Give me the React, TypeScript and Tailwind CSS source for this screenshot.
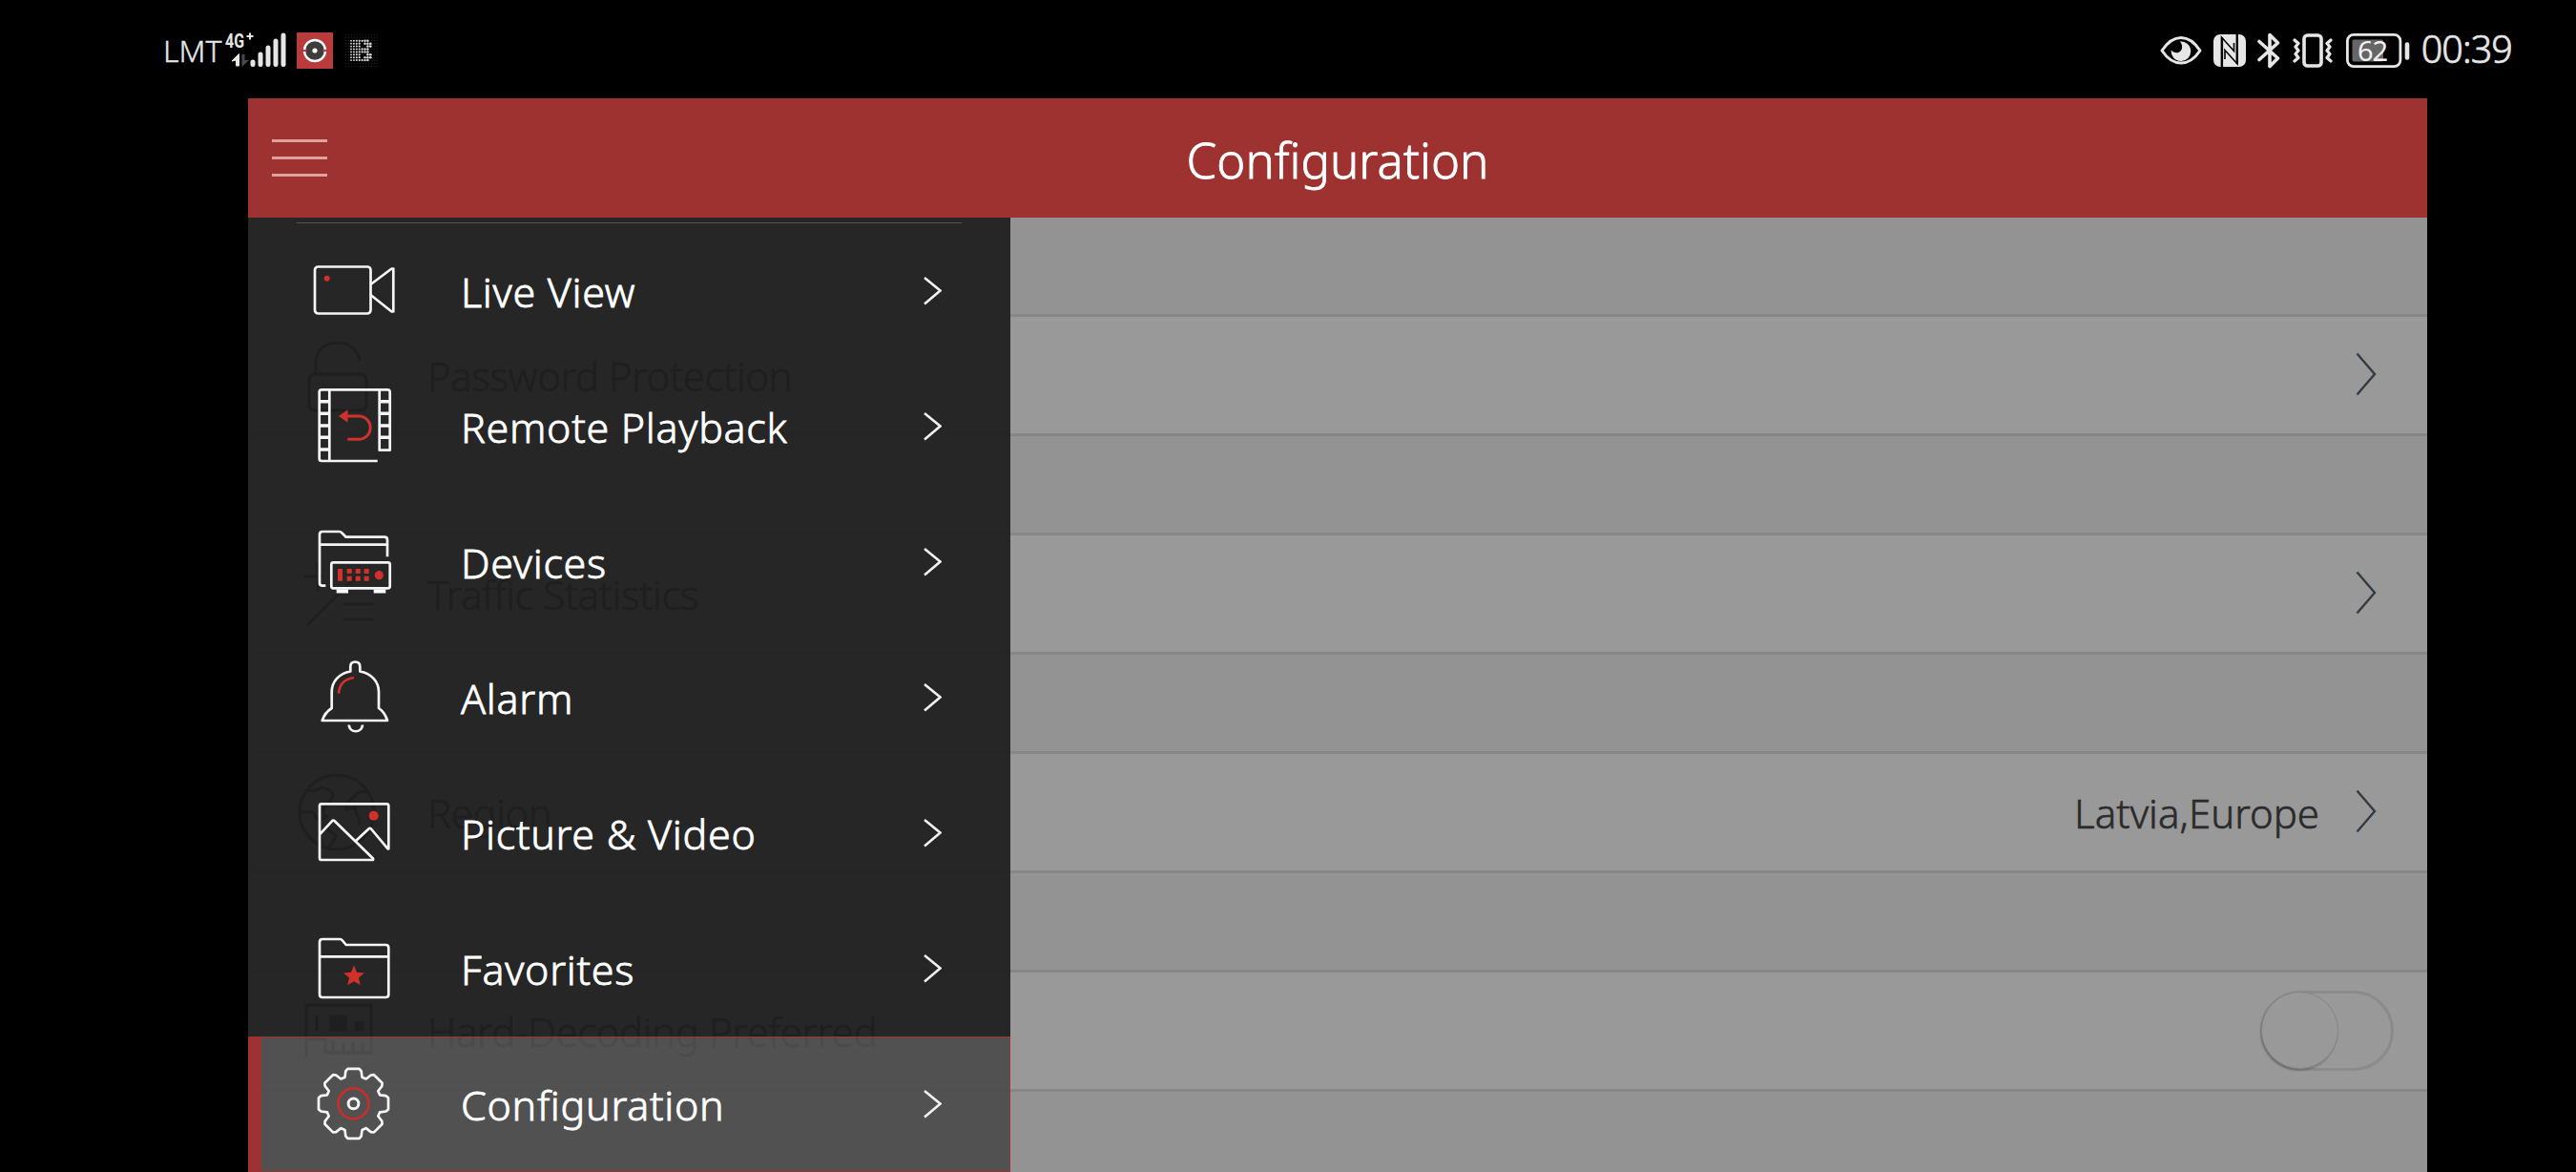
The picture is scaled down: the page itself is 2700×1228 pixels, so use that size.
import type { ReactNode } from "react";

const RED = "#d0312b";

/* ---------- Status bar ---------- */

const DOTS = [
  "1111111.",
  "1111.111",
  "1111..11",
  "1111111.",
  "1111111.",
  "1111..11",
  "1111.111",
  "1111111.",
];

function SignalIcon() {
  return (
    <svg width="68" height="40" viewBox="0 0 68 40" className="ml-[3px] overflow-visible">
      <text x="1" y="17" fontSize="19.5" fontWeight="700" fill="#e6e6e6" fontFamily="Roboto, sans-serif" textLength="20" lengthAdjust="spacingAndGlyphs">
        4G
      </text>
      <path d="M27 1.5v7M23.500 5h7" stroke="#e6e6e6" strokeWidth="2" />
      <path d="M8 31l7.5-7.5V36h-3V30z" fill="#e6e6e6" stroke="#e6e6e6" strokeWidth="1" />
      <path d="M18.500 24h3v6h4.500l-7.500 7z" fill="#4a4a4a" />
      <g stroke="#e6e6e6" strokeWidth="5" strokeLinecap="round">
        <path d="M30 32v2.500M38 24v10.500M46 17v17.500M54 10v24.500M62 4v30.500" />
      </g>
    </svg>
  );
}

function RecordAppIcon() {
  return (
    <svg width="38" height="38" viewBox="0 0 38 38" className="ml-[8px]">
      <rect width="38" height="38" fill="#b93b3c" />
      <circle cx="19" cy="19" r="11" fill="#3d3d3d" stroke="#fff" strokeWidth="2.4" />
      <path d="M5.500 19h5M27.500 19h5" stroke="#b93b3c" strokeWidth="2" />
      <circle cx="19" cy="19" r="2.600" fill="#fff" />
    </svg>
  );
}

function DotsIcon() {
  return (
    <svg width="36" height="38" viewBox="0 0 36 38" className="ml-[12px]">
      {Array.from({ length: 144 }, (_, i) => (
        <circle key={i} cx={1.5 + (i % 12) * 3} cy={2.5 + Math.floor(i / 12) * 3} r="0.8" fill="#1c1c1c" />
      ))}
      {DOTS.map((row, y) =>
        row.split("").map((c, x) =>
          c === "1" ? <circle key={`${x}-${y}`} cx={7 + x * 2.9} cy={8.8 + y * 2.9} r={0.9 + x * 0.06} fill="#dcdcdc" /> : null
        )
      )}
    </svg>
  );
}

function EyeIcon() {
  return (
    <svg width="44" height="32" viewBox="0 0 44 32">
      <path d="M2 16C8 7 14.500 2.500 22 2.500S36 7 42 16C36 25 29.500 29 22 29S8 25 2 16z" fill="none" stroke="#e6e6e6" strokeWidth="3" strokeLinejoin="round" />
      <path d="M20.500 6.500A10.300 10.300 0 1 1 11.700 15.500C14 18.500 19 19.500 21.500 16.500C24 13.500 23.500 8.500 20.500 6.500z" fill="#e6e6e6" />
    </svg>
  );
}

function NfcIcon() {
  return (
    <svg width="34" height="34" viewBox="0 0 34 34" className="ml-[12px]">
      <rect width="34" height="34" rx="7" fill="#e6e6e6" />
      <path d="M8.500 34V3L21.500 17.500V9M25 0V31L12 16.500V26" fill="none" stroke="#000" strokeWidth="1.600" />
      <path d="M9 3.500v30.500M24.700 0v30.500" stroke="#000" strokeWidth="2.200" />
    </svg>
  );
}

function BluetoothIcon() {
  return (
    <svg width="24" height="38" viewBox="0 0 24 38" className="ml-[12px]">
      <path d="M2 9.500L21.500 27L13 35.500V2.500L21.500 11L2 28.500" fill="none" stroke="#e6e6e6" strokeWidth="3.600" strokeLinecap="round" strokeLinejoin="round" />
    </svg>
  );
}

function VibrateIcon() {
  return (
    <svg width="42" height="36" viewBox="0 0 42 36" className="ml-[13px]">
      <rect x="12" y="2" width="18" height="32" rx="3.500" fill="none" stroke="#e6e6e6" strokeWidth="3.600" />
      <path d="M2 7l4 3.500-3 3.500 3 4-3 3.500 3 4L2 29M40 7l-4 3.500 3 3.500-3 4 3 3.500-3 4L40 29" fill="none" stroke="#e6e6e6" strokeWidth="3.200" strokeLinecap="round" strokeLinejoin="round" />
    </svg>
  );
}

function BatteryIcon() {
  return (
    <svg width="67" height="36" viewBox="0 0 67 36" className="ml-[14px] overflow-visible">
      <rect x="1.400" y="1.400" width="55.500" height="33.200" rx="6.500" fill="none" stroke="#e6e6e6" strokeWidth="2.800" />
      <rect x="6.500" y="6.500" width="32.500" height="23" rx="2" fill="#666" />
      <text x="12" y="28.500" fontSize="29" fontWeight="400" fill="#f2f2f2" fontFamily="'Noto Sans', sans-serif" textLength="32">
        62
      </text>
      <path d="M64 11.500v14" stroke="#e6e6e6" strokeWidth="4.600" strokeLinecap="round" />
    </svg>
  );
}

function StatusBar() {
  return (
    <div className="flex h-[103px] items-center justify-between pr-[67px] pl-[171px] pt-[2px] text-[#e6e6e6]">
      <div className="flex items-center">
        <span className="text-[32px] leading-none font-[300] [-webkit-text-stroke:0.4px]">LMT</span>
        <SignalIcon />
        <RecordAppIcon />
        <DotsIcon />
      </div>
      <div className="flex items-center">
        <EyeIcon />
        <NfcIcon />
        <BluetoothIcon />
        <VibrateIcon />
        <BatteryIcon />
        <span className="ml-[12px] -mt-[2px] text-[39.5px] leading-none font-[300] tracking-[-0.9px] [-webkit-text-stroke:0.7px]">00:39</span>
      </div>
    </div>
  );
}

/* ---------- Settings list ---------- */

function LockIcon() {
  return (
    <>
      <rect x="11" y="39" width="60" height="38" rx="6" />
      <path d="M18 39V28C18 13 28 6 41 6S62 14 64 25" />
    </>
  );
}

function TrafficIcon() {
  return (
    <>
      <path d="M5 22h20M20 8v30" />
      <path d="M9 73L60 22M47 51h32M47 67h32" />
    </>
  );
}

function GlobeIcon() {
  return (
    <>
      <circle cx="40" cy="40" r="39" />
      <path d="M9 16q8 4 14-2q12 2 13 8q-2 8-9 13q-3 6 2 10l-9 2-6-7H2" />
      <path d="M73 20q-10-4-14 3q-10 6-9 14l9-2 2 8q4 4 2 10M24 77q2-8-3-14l9-6 9 8-7 13" />
    </>
  );
}

function ChipIcon() {
  return (
    <>
      <path d="M8 68V13h68v50H28V49H8" />
      <path d="M19 24v16M36 50v12M47 52v10M57 52v10M67 52v10" />
      <rect x="34" y="25" width="15" height="14" fill="#2b2b2b" />
      <rect x="60" y="32" width="7" height="7" fill="#2b2b2b" />
    </>
  );
}

function RowArrow() {
  return (
    <svg width="22" height="46" viewBox="0 0 22 46" className="mr-[53px] -mt-[2px]">
      <path d="M1.500 1.500L20 23 1.500 44.500" fill="none" stroke="#343a42" strokeWidth="2.400" />
    </svg>
  );
}

function Toggle() {
  return (
    <div className="mr-[35px] h-[84px] w-[140px] rounded-full border-[3px] border-[#8b8b8b]">
      <div className="-mt-[2px] -ml-[2px] size-[81px] rounded-full border-[1.5px] border-[#868686] bg-[#999] shadow-[-1px_2px_2px_rgba(0,0,0,0.2)]" />
    </div>
  );
}

function SettingRow({ label, icon, children }: { label: string; icon: ReactNode; children: ReactNode }) {
  return (
    <div className="mt-[101px] flex h-[128px] items-center border-y-[3px] border-[#878787] bg-[#999] text-[#2b2b2b]">
      <svg width="80" height="80" viewBox="0 0 80 80" className="ml-[53px] overflow-visible" fill="none" stroke="#2b2b2b" strokeWidth="3">
        {icon}
      </svg>
      <span className="mt-[2px] ml-[55px] flex-1 text-[42px] leading-none font-[300] tracking-[-0.45px] [-webkit-text-stroke:0.6px]">{label}</span>
      {children}
    </div>
  );
}

function Settings() {
  return (
    <div className="h-[1000px] overflow-hidden bg-[#939393]">
      <SettingRow label="Password Protection" icon={<LockIcon />}>
        <RowArrow />
      </SettingRow>
      <SettingRow label="Traffic Statistics" icon={<TrafficIcon />}>
        <RowArrow />
      </SettingRow>
      <SettingRow label="Region" icon={<GlobeIcon />}>
        <span className="mt-[2px] mr-[38px] text-[42px] leading-none font-[300] [-webkit-text-stroke:0.6px]">Latvia,Europe</span>
        <RowArrow />
      </SettingRow>
      <SettingRow label="Hard-Decoding Preferred" icon={<ChipIcon />}>
        <Toggle />
      </SettingRow>
    </div>
  );
}

/* ---------- Drawer ---------- */

const CX = 44.5;
const CY = 44.3;
const TOOTH = [
  [29, -18],
  [35, -13.5],
  [37, -9.5],
  [37, 9.5],
  [35, 13.5],
  [29, 18],
];

const gearPoints = Array.from({ length: 8 }, (_, i) =>
  TOOTH.map(([r, deg]) => {
    const a = ((deg + i * 45 - 90) * Math.PI) / 180;
    return `${(CX + r * Math.cos(a)).toFixed(1)},${(CY + r * Math.sin(a)).toFixed(1)}`;
  }).join(" ")
).join(" ");

const starPoints = Array.from({ length: 10 }, (_, i) => {
  const r = i % 2 ? 5.2 : 11.5;
  const a = ((i * 36 - 90) * Math.PI) / 180;
  return `${(45 + r * Math.cos(a)).toFixed(1)},${(53 + r * Math.sin(a)).toFixed(1)}`;
}).join(" ");

const menu = [
  {
    label: "Live View",
    icon: (
      <>
        <rect x="4" y="19.5" width="58.5" height="49" rx="3.5" />
        <path d="M62.500 38L84.500 21.500H86.300V66.500H84.500L62.500 49" />
        <circle cx="16.700" cy="31.700" r="3" fill={RED} stroke="none" />
      </>
    ),
  },
  {
    label: "Remote Playback",
    icon: (
      <>
        <path d="M69.700 81H11.200Q8.700 81 8.700 78.500V8.800Q8.700 6.300 11.200 6.300H80.200Q82.700 6.300 82.700 8.800V69.700H71.700V6.300M19.300 6.300V81" />
        <path strokeWidth="3.400" d="M8.700 18.700h10.600M8.700 31.300h10.600M8.700 44h10.600M8.700 56.300h10.600M8.700 69h10.600M71.700 18.700h11M71.700 31.300h11M71.700 44h11M71.700 56.300h11" />
        <path d="M38 34H50A12.150 12.150 0 0 1 50 58.300H38.300" stroke={RED} strokeWidth="3" />
        <path d="M29 34l9.500-6.800v13.600z" fill={RED} stroke="none" />
      </>
    ),
  },
  {
    label: "Devices",
    icon: (
      <>
        <path d="M15.300 69.700H12Q9 69.700 9 66.700V16Q9 13 12 13H29.500Q31.300 13 32.500 14.500L36.700 18.700H77Q80 18.700 80 21.700V39.300M9 26.700H80" />
        <rect x="21.300" y="45.300" width="61.400" height="27" rx="2" />
        <path d="M26.700 73.500H39v4H26.700zM65.700 73.500h12.600v4H65.700z" fill="#fff" stroke="none" />
        <path d="M28 52h5v12.700h-5zM37.700 52h5v5h-5zM46.700 52h5v5h-5zM55.700 52h5v5h-5zM37.700 59.700h5v5h-5zM46.700 59.700h5v5h-5zM55.700 59.700h5v5h-5z" fill={RED} stroke="none" />
        <circle cx="71.300" cy="58.700" r="4.600" fill={RED} stroke="none" />
      </>
    ),
  },
  {
    label: "Alarm",
    icon: (
      <>
        <path d="M41.300 17.500V12.500Q41.300 7.500 46.300 7.500T51.300 12.500V17.500C63 19.500 71 28 71 39V56Q77.500 60.500 80 69H11.700Q14.500 60.500 21.700 56V39C21.700 28 29.500 19.500 41.300 17.500z" />
        <path d="M39.700 73.500C40.500 82.500 53.200 82.500 54 73.500" />
        <path d="M29 40.700Q30 26 45 24" stroke={RED} />
      </>
    ),
  },
  {
    label: "Picture & Video",
    icon: (
      <>
        <path d="M9 46.300L22 32.300Q23.300 31 24.700 32.300L65 71.500V73H11Q9 73 9 71V16.300Q9 14.300 11 14.300H79.300Q81.300 14.300 81.300 16.300V61.300H80.500L63 40.500Q61.700 39.200 60.400 40.500L46.700 53.300" />
        <circle cx="65.700" cy="26.700" r="5" fill={RED} stroke="none" />
      </>
    ),
  },
  {
    label: "Favorites",
    icon: (
      <>
        <path d="M12 14H30Q32 14 33 15.500L36.700 20H78.300Q81.300 20 81.300 23V72Q81.300 75 78.300 75H12Q9 75 9 72V17Q9 14 12 14zM9 32.300H81.300" />
        <polygon points={starPoints} fill={RED} stroke="none" />
      </>
    ),
  },
  {
    label: "Configuration",
    active: true,
    icon: (
      <>
        <polygon points={gearPoints} />
        <circle cx={CX} cy={CY} r="16" stroke="#c0302c" strokeWidth="2.800" />
        <circle cx={CX} cy={CY} r="5.400" strokeWidth="3" />
      </>
    ),
  },
];

function Drawer() {
  return (
    <nav className="absolute top-0 left-0 h-[1000px] w-[799px] overflow-hidden bg-[#1e1e1e]/[0.935] pt-[5px] text-white">
      <div className="mr-[51px] ml-[51px] h-px bg-[#57544f]" />
      {menu.map((item) => (
        <div
          key={item.label}
          className={
            item.active
              ? "flex h-[142px] items-center border border-l-[14px] border-[#9d3230] bg-white/20 bg-clip-padding pr-[71px] pl-[52px]"
              : "flex h-[142px] items-center pr-[72px] pl-[66px]"
          }
        >
          <svg width="90" height="90" viewBox="0 0 90 90" fill="none" stroke="#f5f5f5" strokeWidth="2.7" strokeLinejoin="round">
            {item.icon}
          </svg>
          <span className="ml-[67px] flex-1 text-[43px] leading-none font-[300] tracking-[0.7px] [-webkit-text-stroke:0.8px]">{item.label}</span>
          <svg width="20" height="30" viewBox="0 0 20 30">
            <path d="M2 1L18.500 14.500 2 28.500" fill="none" stroke="#f0f0f0" strokeWidth="2.600" />
          </svg>
        </div>
      ))}
    </nav>
  );
}

export default function App() {
  return (
    <div className="h-[1228px] w-[2700px] overflow-hidden bg-black font-['Noto_Sans',sans-serif]">
      <StatusBar />
      <div className="ml-[260px] w-[2284px]">
        <header className="grid h-[125px] grid-cols-[1fr_auto_1fr] items-center bg-[#9d3230]">
          <div className="ml-[25px] flex w-[58px] flex-col gap-[15px]">
            <span className="h-[3px] bg-[#e0a09e]" />
            <span className="h-[3px] bg-[#e0a09e]" />
            <span className="h-[3px] bg-[#e0a09e]" />
          </div>
          <h1 className="pt-[3px] text-[51px] leading-none font-[300] text-white [-webkit-text-stroke:0.8px]">Configuration</h1>
        </header>
        <main className="relative">
          <Settings />
          <Drawer />
        </main>
      </div>
    </div>
  );
}
